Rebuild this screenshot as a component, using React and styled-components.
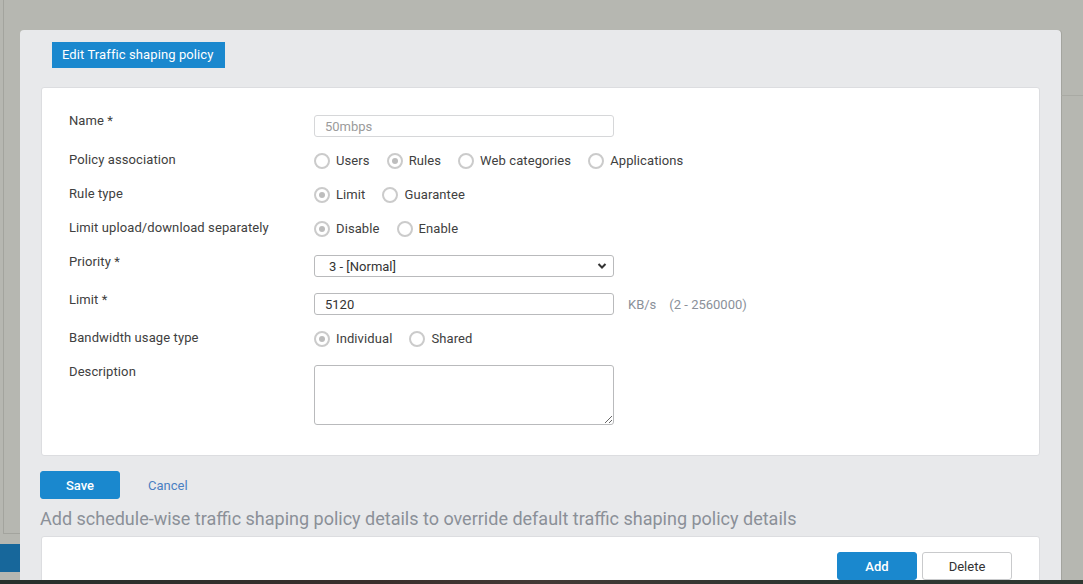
import React from 'react';
import styled, {createGlobalStyle} from 'styled-components';

const GlobalStyle = createGlobalStyle`
  html, body { margin: 0; padding: 0; }
  body {
    font-family: Roboto, "Liberation Sans", Arial, sans-serif;
    font-size: 13px;
    color: #404040;
    background: #b6b7b1;
  }
`;

const Page = styled.div`
  height: 584px;
  display: flex;
  flex-direction: column;
  overflow: hidden;
`;

const Stage = styled.div`
  flex: 1;
  min-height: 0;
  display: flex;
  overflow: hidden;
`;

const LeftRail = styled.div`
  width: 20px;
  display: flex;
  flex-direction: column;
`;

const RailTop = styled.div`
  flex: 1;
  margin-left: 3px;
  border-left: 1px solid #a3a49e;
  border-bottom: 1px solid #a3a49e;
`;

const RailTab = styled.div`
  height: 28px;
  margin-top: 10px;
  background: #17679b;
`;

const RailFoot = styled.div`
  height: 8px;
`;

const RightRail = styled.div`
  flex: 1;
`;

const RailCap = styled.div`
  height: 95px;
  border-bottom: 1px solid #a9aaa4;
`;

const Dialog = styled.div`
  width: 1041px;
  margin-top: 30px;
  background: #e8e9eb;
  border-radius: 4px 4px 0 0;
  box-shadow: 1px 0 0 #a3a49e;
  display: flex;
  flex-direction: column;
`;

const TitleTab = styled.div`
  align-self: flex-start;
  margin: 12px 0 0 32px;
  height: 26px;
  line-height: 26px;
  padding: 0 11px 0 10px;
  background: #1a88ce;
  color: #fff;
  font-size: 13px;
  letter-spacing: 0.1px;
`;

const Panel = styled.div`
  margin: ${p => p.$top}px 21px 0 21px;
  background: #fff;
  border: 1px solid #dcdde0;
  border-radius: 3px;
  padding: ${p => p.$pad};
  box-sizing: border-box;
`;

const Row = styled.div`
  display: flex;
  align-items: flex-start;
  min-height: ${p => p.$h}px;
`;

const Label = styled.div`
  width: 245px;
  line-height: 18px;
  color: #404040;
  letter-spacing: 0.1px;
`;

const Control = styled.div`
  margin-top: ${p => p.$off}px;
  display: flex;
  align-items: center;
`;

const TextInput = styled.input`
  width: 300px;
  height: 22px;
  box-sizing: border-box;
  border: 1px solid ${p => (p.disabled ? '#d6d7d9' : '#b9babc')};
  border-radius: 3px;
  padding: 0 10px;
  font: inherit;
  font-size: 13px;
  color: ${p => (p.disabled ? '#9b9b9b' : '#333')};
  background: #fff;
  outline: none;
`;

const SelectWrap = styled.div`
  position: relative;
  width: 300px;
`;

const Select = styled.select`
  width: 300px;
  height: 22px;
  box-sizing: border-box;
  border: 1px solid #b9babc;
  border-radius: 3px;
  padding: 0 0 0 14px;
  font: inherit;
  font-size: 13px;
  color: #333;
  background: #fff;
  appearance: none;
  outline: none;
`;

const Chevron = styled.svg`
  position: absolute;
  right: 7px;
  top: 7px;
  pointer-events: none;
`;

const TextArea = styled.textarea`
  width: 300px;
  height: 60px;
  box-sizing: border-box;
  border: 1px solid #b9babc;
  border-radius: 3px;
  font: inherit;
  resize: vertical;
  outline: none;
`;

const Unit = styled.span`
  color: #8a9099;
  margin-left: ${p => p.$gap}px;
`;

const RadioGroup = styled.div`
  display: flex;
  align-items: center;
  gap: 17px;
  line-height: 18px;
`;

const RadioOption = styled.label`
  display: flex;
  align-items: center;
  gap: 6px;
  color: #404040;
  letter-spacing: 0.1px;
`;

const RadioDot = styled.span`
  width: 16px;
  height: 16px;
  box-sizing: border-box;
  border-radius: 50%;
  border: 2px solid #cbcbcb;
  display: flex;
  align-items: center;
  justify-content: center;
  &::after {
    content: '';
    width: 6px;
    height: 6px;
    border-radius: 50%;
    background: ${p => (p.$on ? '#bdbdbd' : 'transparent')};
  }
`;

const Actions = styled.div`
  display: flex;
  align-items: center;
  margin: 15px 0 0 20px;
`;

const Button = styled.button`
  width: ${p => p.$w}px;
  height: 28px;
  border-radius: 3px;
  font: inherit;
  font-size: 13px;
  cursor: pointer;
  background: ${p => (p.$primary ? '#1a88ce' : '#fff')};
  color: ${p => (p.$primary ? '#fff' : '#333')};
  border: 1px solid ${p => (p.$primary ? '#1a88ce' : '#c9cacc')};
  font-weight: ${p => (p.$primary ? 500 : 400)};
`;

const LinkButton = styled.a`
  margin-left: 28px;
  color: #4a7fc2;
  cursor: pointer;
`;

const SectionTitle = styled.div`
  margin: 8px 0 0 20px;
  font-size: 18px;
  line-height: 24px;
  color: #8b9098;
`;

const ToolBar = styled.div`
  display: flex;
  justify-content: flex-end;
  gap: 5px;
`;

const BottomBar = styled.div`
  height: 4px;
  background: linear-gradient(90deg, #26302c 0%, #3a2f2c 35%, #433a36 50%, #2c3530 75%, #2f3832 100%);
`;

const Radios = ({options, value}) => (
  <RadioGroup>
    {options.map(o => (
      <RadioOption key={o}>
        <RadioDot $on={o === value} />
        {o}
      </RadioOption>
    ))}
  </RadioGroup>
);

export default function App() {
  return (
    <>
      <GlobalStyle />
      <Page>
        <Stage>
          <LeftRail>
            <RailTop />
            <RailTab />
            <RailFoot />
          </LeftRail>
          <Dialog>
            <TitleTab>Edit Traffic shaping policy</TitleTab>
            <Panel $top={19} $pad="24px 0 30px 27px">
              <Row $h={39}>
                <Label>Name *</Label>
                <Control $off={3}>
                  <TextInput disabled defaultValue="50mbps" />
                </Control>
              </Row>
              <Row $h={34}>
                <Label>Policy association</Label>
                <Control $off={1}>
                  <Radios options={['Users', 'Rules', 'Web categories', 'Applications']} value="Rules" />
                </Control>
              </Row>
              <Row $h={34}>
                <Label>Rule type</Label>
                <Control $off={1}>
                  <Radios options={['Limit', 'Guarantee']} value="Limit" />
                </Control>
              </Row>
              <Row $h={34}>
                <Label>Limit upload/download separately</Label>
                <Control $off={1}>
                  <Radios options={['Disable', 'Enable']} value="Disable" />
                </Control>
              </Row>
              <Row $h={38}>
                <Label>Priority *</Label>
                <Control $off={2}>
                  <SelectWrap>
                    <Select defaultValue="3">
                      <option value="3">3 - [Normal]</option>
                    </Select>
                    <Chevron width="10" height="8" viewBox="0 0 10 8">
                      <path d="M1.5 2l3.5 3.5L8.5 2" fill="none" stroke="#333" strokeWidth="2" />
                    </Chevron>
                  </SelectWrap>
                </Control>
              </Row>
              <Row $h={38}>
                <Label>Limit *</Label>
                <Control $off={2}>
                  <TextInput defaultValue="5120" />
                  <Unit $gap={14}>KB/s</Unit>
                  <Unit $gap={13}>(2 - 2560000)</Unit>
                </Control>
              </Row>
              <Row $h={34}>
                <Label>Bandwidth usage type</Label>
                <Control $off={1}>
                  <Radios options={['Individual', 'Shared']} value="Individual" />
                </Control>
              </Row>
              <Row $h={62}>
                <Label>Description</Label>
                <Control $off={2}>
                  <TextArea />
                </Control>
              </Row>
            </Panel>
            <Actions>
              <Button $primary $w={80}>Save</Button>
              <LinkButton>Cancel</LinkButton>
            </Actions>
            <SectionTitle>
              Add schedule-wise traffic shaping policy details to override default traffic shaping policy details
            </SectionTitle>
            <Panel $top={5} $pad="15px 27px 40px 0">
              <ToolBar>
                <Button $primary $w={80}>Add</Button>
                <Button $w={90}>Delete</Button>
              </ToolBar>
            </Panel>
          </Dialog>
          <RightRail>
            <RailCap />
          </RightRail>
        </Stage>
        <BottomBar />
      </Page>
    </>
  );
}
